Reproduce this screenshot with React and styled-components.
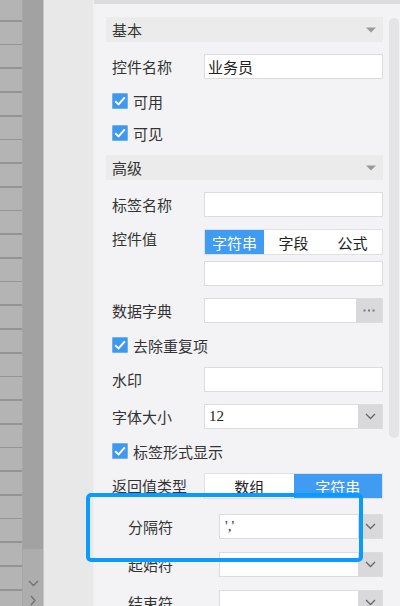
import React from 'react';
import styled, { createGlobalStyle } from 'styled-components';

const Global = createGlobalStyle`
  html, body { margin: 0; padding: 0; }
  body { font-family: "Noto Sans CJK SC", "Noto Sans", sans-serif; color: #333; }
`;

const Screen = styled.div`
  position: relative;
  display: flex;
  width: 400px;
  height: 606px;
  overflow: hidden;
  background: #f3f3f5;
`;

const SheetRows = styled.div`
  width: 22px;
  flex-shrink: 0;
  background: repeating-linear-gradient(to bottom, #b4b4b4 0px, #b4b4b4 22px, #949494 22px, #949494 23.7px);
  background-position: 0 -2px;
  border-right: 1px solid #a6a6a6;
`;

const ScrollCol = styled.div`
  width: 20px;
  flex-shrink: 0;
  display: flex;
  flex-direction: column;
`;

const ScrollTrack = styled.div`
  flex: 1;
  background: #a2a2a2;
`;

const ScrollFoot = styled.div`
  height: 57px;
  background: #adadad;
  display: flex;
  flex-direction: column;
  align-items: center;
  padding-top: 31px;
  gap: 8px;
  box-sizing: border-box;
`;

const Divider = styled.div`
  width: 1px;
  flex-shrink: 0;
  background: #c6c6c6;
`;

const Gutter = styled.div`
  width: 49px;
  flex-shrink: 0;
  background: #e8e8e8;
  border-right: 1px solid #efeff0;
`;

const Panel = styled.div`
  flex: 1;
  display: flex;
  align-items: flex-start;
  background: #f3f3f5;
  border-top: 4px solid #dcdcdf;
  padding: 13px 1px 0 12px;
  overflow: hidden;
`;

const Content = styled.div`
  width: 277px;
  flex-shrink: 0;
  display: flex;
  flex-direction: column;
  gap: 12px;
`;

const ScrollThumb = styled.div`
  width: 10px;
  height: 420px;
  margin: 1px 0 0 6px;
  border-radius: 5px;
  background: #e4e4e6;
`;

const SectionHeader = styled.div`
  height: 25px;
  display: flex;
  align-items: center;
  justify-content: space-between;
  padding: 0 7px 0 6px;
  background: #ebebeb;
  font-size: 15px;
  line-height: 20px;
  color: #333;
`;

const Row = styled.div`
  display: flex;
  align-items: ${(p) => (p.$top ? 'flex-start' : 'center')};
  padding-left: ${(p) => (p.$indent ? 22 : 6)}px;
`;

const Label = styled.div`
  width: ${(p) => (p.$indent ? 91 : 92)}px;
  flex-shrink: 0;
  font-size: 15px;
  line-height: 20px;
  color: #333;
  white-space: nowrap;
  overflow: hidden;
`;

const Stack = styled.div`
  flex: 1 1 auto;
  min-width: 0;
  display: flex;
  flex-direction: column;
  gap: 6px;
`;

const Field = styled.div`
  flex: 1 1 auto;
  min-width: 0;
  height: 25px;
  box-sizing: border-box;
  background: #fff;
  border: 1px solid #dcdcdc;
  padding-left: 3px;
  display: flex;
  align-items: center;
  font-size: 15px;
  color: #222;
`;

const SelectBox = styled.div`
  flex: 1 1 auto;
  min-width: 0;
  height: 25px;
  box-sizing: border-box;
  display: flex;
  border: 1px solid #dcdcdc;
  background: #fff;
`;

const SelectValue = styled.div`
  flex: 1;
  display: flex;
  align-items: center;
  padding-left: ${(p) => (p.$pad ? p.$pad : 4)}px;
  font-family: "Liberation Serif", serif;
  font-size: 15px;
  color: ${(p) => p.$color || '#222'};
`;

const SideButton = styled.div`
  width: ${(p) => p.$w || 24}px;
  flex-shrink: 0;
  display: flex;
  align-items: center;
  justify-content: center;
  background: #d9d9dc;
`;

const Segmented = styled.div`
  height: 26px;
  box-sizing: border-box;
  display: flex;
  border: 1px solid #e0e0e2;
  background: #fff;
`;

const Seg = styled.div`
  flex: 1;
  display: flex;
  align-items: center;
  justify-content: center;
  font-size: 15px;
  background: ${(p) => (p.$active ? '#3f9cf2' : '#fff')};
  color: ${(p) => (p.$active ? '#fff' : '#222')};
`;

const CheckRow = styled.div`
  height: 20px;
  display: flex;
  align-items: center;
  padding-left: 6px;
  gap: 5px;
  font-size: 15px;
  color: #333;
`;

const CheckBox = styled.div`
  width: 16px;
  height: 16px;
  box-sizing: border-box;
  border-radius: 1px;
  background: #3d98ee;
  border: 1px solid #6cb2f2;
  display: flex;
  align-items: center;
  justify-content: center;
`;

const Group = styled.div`
  display: flex;
  flex-direction: column;
  gap: 13px;
  margin-top: 3px;
`;

const Highlight = styled.div`
  position: absolute;
  left: 86px;
  top: 493px;
  width: 277px;
  height: 69px;
  box-sizing: border-box;
  border: 4px solid #0a9bff;
  border-radius: 5px;
  pointer-events: none;
`;

const Tri = () => (
  <svg width="10" height="6" viewBox="0 0 10 6">
    <path d="M0 0.5 H10 L5 5.5 Z" fill="#9a9a9a" />
  </svg>
);

const Chevron = ({ color = '#666' }) => (
  <svg width="11" height="7" viewBox="0 0 11 7">
    <path d="M1 1 L5.5 5.5 L10 1" fill="none" stroke={color} strokeWidth="1.3" />
  </svg>
);

const Dots = () => (
  <svg width="12" height="3" viewBox="0 0 12 3">
    <rect x="0.5" y="0.5" width="2" height="2" fill="#7a7a7a" />
    <rect x="5" y="0.5" width="2" height="2" fill="#7a7a7a" />
    <rect x="9.5" y="0.5" width="2" height="2" fill="#7a7a7a" />
  </svg>
);

const Check = () => (
  <svg width="12" height="10" viewBox="0 0 12 10">
    <path d="M1.2 5.2 L4.6 8.4 L10.8 1.4" fill="none" stroke="#fff" strokeWidth="2" />
  </svg>
);

const Checked = ({ children }) => (
  <CheckRow>
    <CheckBox>
      <Check />
    </CheckBox>
    {children}
  </CheckRow>
);

const Dropdown = ({ value, color, pad }) => (
  <SelectBox>
    <SelectValue $color={color} $pad={pad}>
      {value}
    </SelectValue>
    <SideButton>
      <Chevron />
    </SideButton>
  </SelectBox>
);

export default function App() {
  return (
    <>
      <Global />
      <Screen>
        <SheetRows />
        <ScrollCol>
          <ScrollTrack />
          <ScrollFoot>
            <Chevron color="#707070" />
            <svg width="6" height="11" viewBox="0 0 6 11">
              <path d="M1 1 L5 5.5 L1 10" fill="none" stroke="#707070" strokeWidth="1.3" />
            </svg>
          </ScrollFoot>
        </ScrollCol>
        <Divider />
        <Gutter />
        <Panel>
          <Content>
            <SectionHeader>
              基本
              <Tri />
            </SectionHeader>
            <Row>
              <Label>控件名称</Label>
              <Field>业务员</Field>
            </Row>
            <Checked>可用</Checked>
            <Checked>可见</Checked>
            <SectionHeader>
              高级
              <Tri />
            </SectionHeader>
            <Row>
              <Label>标签名称</Label>
              <Field />
            </Row>
            <Row $top>
              <Label>控件值</Label>
              <Stack>
                <Segmented>
                  <Seg $active>字符串</Seg>
                  <Seg>字段</Seg>
                  <Seg>公式</Seg>
                </Segmented>
                <Field />
              </Stack>
            </Row>
            <Row>
              <Label>数据字典</Label>
              <SelectBox>
                <SelectValue />
                <SideButton $w={26}>
                  <Dots />
                </SideButton>
              </SelectBox>
            </Row>
            <Checked>去除重复项</Checked>
            <Row>
              <Label>水印</Label>
              <Field />
            </Row>
            <Row>
              <Label>字体大小</Label>
              <Dropdown value="12" />
            </Row>
            <Checked>标签形式显示</Checked>
            <Row>
              <Label>返回值类型</Label>
              <Stack>
                <Segmented>
                  <Seg>数组</Seg>
                  <Seg $active>字符串</Seg>
                </Segmented>
              </Stack>
            </Row>
            <Group>
              <Row $indent>
                <Label $indent>分隔符</Label>
                <Dropdown value="','" color="#2b2b8c" pad={5} />
              </Row>
              <Row $indent>
                <Label $indent>起始符</Label>
                <Dropdown value="" />
              </Row>
              <Row $indent>
                <Label $indent>结束符</Label>
                <Dropdown value="" />
              </Row>
            </Group>
          </Content>
          <ScrollThumb />
        </Panel>
        <Highlight />
      </Screen>
    </>
  );
}
